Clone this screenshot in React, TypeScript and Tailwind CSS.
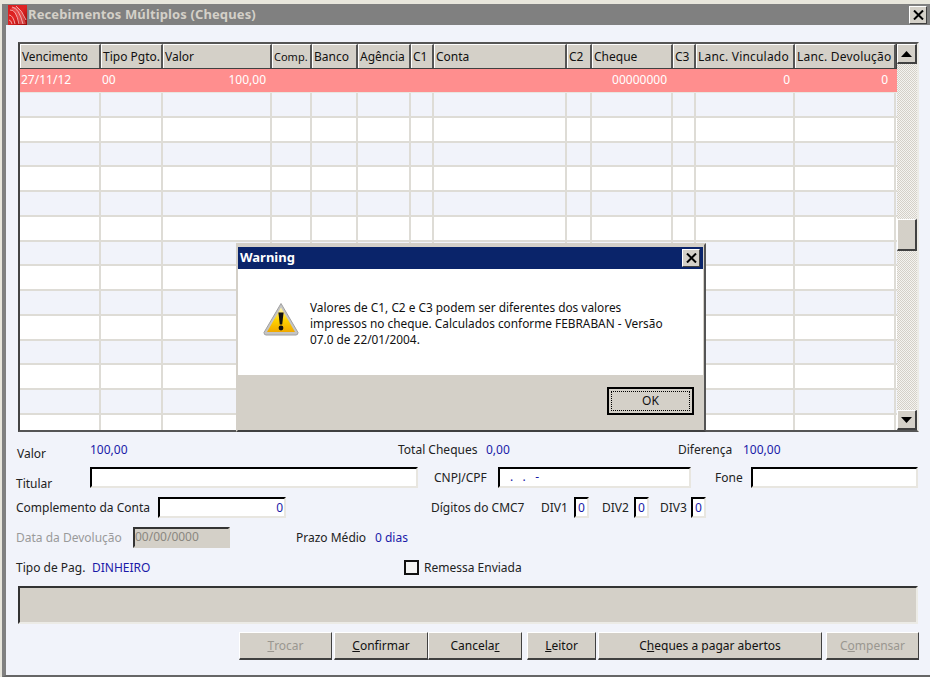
import React from "react";

const cols = [
  { label: "Vencimento", w: 81, cell: "27/11/12", pr: "", hc: "text-[11.8px]" },
  { label: "Tipo Pgto.", w: 62, cell: "00", pr: "", hc: "text-[12px]" },
  { label: "Valor", w: 109, cell: "100,00", pr: "text-right pr-[6px]", hc: "text-[12px]" },
  { label: "Comp.", w: 40, cell: "", pr: "", hc: "text-[11px]" },
  { label: "Banco", w: 46, cell: "", pr: "", hc: "text-[12px]" },
  { label: "Agência", w: 53, cell: "", pr: "", hc: "text-[12px]" },
  { label: "C1", w: 23, cell: "", pr: "", hc: "text-[12px]" },
  { label: "Conta", w: 133, cell: "", pr: "", hc: "text-[12px]" },
  { label: "C2", w: 25, cell: "", pr: "", hc: "text-[12px]" },
  { label: "Cheque", w: 81, cell: "00000000", pr: "text-right pr-[6px]", hc: "text-[12px]" },
  { label: "C3", w: 23, cell: "", pr: "", hc: "text-[12px]" },
  { label: "Lanc. Vinculado", w: 99, cell: "0", pr: "text-right pr-[5px]", hc: "text-[12px] tracking-[0.2px]" },
  { label: "Lanc. Devolução", w: 101, cell: "0", pr: "text-right pr-[8px]", hc: "text-[12px] tracking-[0.2px]" },
];

const raised =
  "border border-t-white border-l-white border-r-[#404040] border-b-[#404040] bg-[#d4d0c8]";
const raisedThick =
  "border border-t-white border-l-white border-r-2 border-b-2 border-r-[#404040] border-b-[#404040] bg-[#d4d0c8]";
const sunken =
  "border-2 border-t-black border-l-black border-r-[#e8e6e0] border-b-[#e8e6e0] bg-white";

function CloseBtn({ size }: { size: number }) {
  return (
    <div
      className={`${raised} flex items-center justify-center shrink-0`}
      style={{ width: size, height: size }}
    >
      <svg width="11" height="10" viewBox="0 0 11 10">
        <path d="M1 0.5 L10 9.5 M10 0.5 L1 9.5" stroke="#000" strokeWidth="2" />
      </svg>
    </div>
  );
}

function Arrow({ up }: { up?: boolean }) {
  return (
    <div className={`${raisedThick} h-[20px] w-[20px] flex items-center justify-center shrink-0`}>
      <svg width="11" height="6" viewBox="0 0 11 6">
        <path d={up ? "M5.5 0 L11 6 L0 6 Z" : "M0 0 L11 0 L5.5 6 Z"} fill="#000" />
      </svg>
    </div>
  );
}

function Btn({
  w,
  ml,
  disabled,
  pre,
  u,
  post,
}: {
  w: number;
  ml: number;
  disabled?: boolean;
  pre?: string;
  u: string;
  post?: string;
}) {
  return (
    <div
      className={`h-[28px] shrink-0 flex items-center justify-center border border-t-white border-l-white border-r-[#404040] border-b-[#404040] border-b-2 bg-[#d4d0c8] text-[12px] ${
        disabled ? "text-[#9a9790]" : "text-[#111]"
      }`}
      style={{ width: w, marginLeft: ml }}
    >
      {pre}
      <span className="underline">{u}</span>
      {post}
    </div>
  );
}

function Logo() {
  return (
    <svg width="19" height="20" viewBox="0 0 19 20" className="shrink-0">
      <defs>
        <linearGradient id="lg" x1="0" y1="0" x2="1" y2="1">
          <stop offset="0" stopColor="#d81e1e" />
          <stop offset="0.5" stopColor="#e02424" />
          <stop offset="1" stopColor="#960808" />
        </linearGradient>
      </defs>
      <rect width="19" height="20" fill="url(#lg)" />
      <path d="M3 3 Q9 0 13 6 Q16 11 18 19 L12 19 Q9 9 3 3 Z" fill="#ee6a6a" opacity="0.55" />
      <path
        d="M2 5 Q8 4 11 19 M4 2 Q11 3 15 19 M8 1 Q14 5 18 15 M1 10 Q5 10 7 19 M1 15 Q3 15 4 19"
        stroke="#f9c8c8"
        strokeWidth="0.8"
        fill="none"
      />
    </svg>
  );
}

function WarnIcon() {
  return (
    <svg width="36" height="34" viewBox="0 0 36 34" className="shrink-0">
      <defs>
        <linearGradient id="wy" x1="0" y1="0" x2="0" y2="1">
          <stop offset="0" stopColor="#fff6b8" />
          <stop offset="0.5" stopColor="#ffd400" />
          <stop offset="1" stopColor="#f0a800" />
        </linearGradient>
      </defs>
      <path
        d="M18 1.5 L35 30.5 Q35 33 33 33 L3 33 Q1 33 1 30.5 Z"
        fill="#c4c4c4"
        stroke="#a0a0a0"
        strokeWidth="1"
        strokeLinejoin="round"
      />
      <path d="M18 5.5 L32 30 L4 30 Z" fill="url(#wy)" />
      <path d="M15.4 10.5 L20.6 10.5 L19.2 22.5 L16.8 22.5 Z" fill="#111" />
      <circle cx="18" cy="26" r="2.4" fill="#111" />
    </svg>
  );
}

function Grid() {
  const rows = Array.from({ length: 14 });
  return (
    <div className="ml-[12px] mt-[17px] w-[901px] h-[390px] flex border-2 border-t-[#555] border-l-[#444] border-b-[#555] border-r-[#ecebe6] bg-white overflow-hidden">
      <div className="w-[877px] shrink-0 flex flex-col">
        <div className="flex h-[25px] shrink-0 bg-[#404040]">
          {cols.map((c) => (
            <div
              key={c.label}
              className={`h-[24px] border-t border-l border-white border-r-2 border-r-[#555] bg-[#d4d0c8] pl-[1px] leading-[23px] text-[#111] whitespace-nowrap overflow-hidden shrink-0 ${c.hc}`}
              style={{ width: c.w }}
            >
              {c.label}
            </div>
          ))}
        </div>
        <div className="flex h-[24px] shrink-0 bg-[#ff8e8e] border-b border-[#e8e6e0]">
          {cols.map((c) => (
            <div
              key={c.label}
              className={`shrink-0 pl-[1px] text-[12px] leading-[21px] text-white whitespace-nowrap ${c.pr}`}
              style={{ width: c.w }}
            >
              {c.cell}
            </div>
          ))}
        </div>
        {rows.map((_, i) => (
          <div
            key={i}
            className={`flex h-[24.75px] shrink-0 border-b-2 border-[#dedcd6] ${
              i % 2 === 0 ? "bg-[#f1f3fa]" : "bg-white"
            }`}
          >
            {cols.map((c) => (
              <div key={c.label} className="shrink-0 border-r-2 border-[#dedcd6]" style={{ width: c.w }} />
            ))}
          </div>
        ))}
      </div>
      <div className="w-[20px] shrink-0 flex flex-col bg-[repeating-conic-gradient(#d4d0c8_0_25%,#f4f3f0_0_50%)] bg-[length:2px_2px]">
        <Arrow up />
        <div className="h-[155px] shrink-0" />
        <div className={`${raisedThick} h-[32px] shrink-0`} />
        <div className="flex-1" />
        <Arrow />
      </div>
    </div>
  );
}

function Dialog() {
  return (
    <div className="absolute left-[230px] top-[239px] w-[470px] h-[189px] border-2 border-t-[#d4d0c8] border-l-[#d4d0c8] border-r-[#555] border-b-[#404040] bg-[#d4d0c8] pt-[2px] pr-[1px] pb-[2px] flex flex-col">
      <div className="h-[22px] shrink-0 bg-[#0a246a] flex items-center justify-between pl-[2px] pr-[3px]">
        <span className="text-[13px] font-bold text-white">Warning</span>
        <CloseBtn size={18} />
      </div>
      <div className="h-[106px] shrink-0 bg-white flex items-start pl-[25px] pt-[33px]">
        <WarnIcon />
        <div className="ml-[11px] text-[11.85px] leading-[16px] text-[#111] -mt-[3px]">
          <div>Valores de C1, C2 e C3 podem ser diferentes dos valores</div>
          <div>impressos no cheque. Calculados conforme FEBRABAN - Versão</div>
          <div>07.0 de 22/01/2004.</div>
        </div>
      </div>
      <div className="flex-1 flex justify-end items-start pt-[12px] pr-[9px]">
        <div className="h-[28px] w-[87px] border-2 border-black p-[2px] bg-[#d4d0c8]">
          <div className="h-full border border-dotted border-black flex items-center justify-center text-[12px] text-[#111]">
            OK
          </div>
        </div>
      </div>
    </div>
  );
}

const Blue = ({ children }: { children: React.ReactNode }) => (
  <span className="text-[#1a1aa8]">{children}</span>
);

function Form() {
  return (
    <div className="pl-[10px] text-[12px] text-[#222]">
      <div className="flex h-[29px] mt-[6px] items-start leading-[16px]">
        <span className="w-[74px] shrink-0 pt-[8px] pl-[1px]">Valor</span>
        <span className="w-[308px] shrink-0 pt-[4px]"><Blue>100,00</Blue></span>
        <span className="w-[88px] shrink-0 pt-[4px]">Total Cheques</span>
        <span className="w-[192px] shrink-0 pt-[4px]"><Blue>0,00</Blue></span>
        <span className="w-[65px] shrink-0 pt-[4px]">Diferença</span>
        <span className="pt-[4px]"><Blue>100,00</Blue></span>
      </div>
      <div className="flex h-[30px] items-start">
        <span className="w-[74px] shrink-0 pt-[8px]">Titular</span>
        <div className={`${sunken} w-[328px] h-[21px] shrink-0`} />
        <span className="w-[80px] shrink-0 pl-[16px] pt-[2px]">CNPJ/CPF</span>
        <div className={`${sunken} w-[193px] h-[21px] shrink-0 text-[#1a1aa8] text-[12px] leading-[16px] pl-[10px] whitespace-pre`}>
          .{"   "}.{"   "}-
        </div>
        <span className="w-[60px] shrink-0 pl-[24px] pt-[2px]">Fone</span>
        <div className={`${sunken} w-[167px] h-[21px] shrink-0`} />
      </div>
      <div className="flex h-[30px] items-start">
        <span className="w-[142px] shrink-0 pt-[2px]">Complemento da Conta</span>
        <div className={`${sunken} w-[128px] h-[21px] shrink-0 text-right text-[#1a1aa8] leading-[17px] pr-[1px]`}>0</div>
        <span className="w-[255px] shrink-0 pl-[145px] pt-[2px]">Dígitos do CMC7</span>
        <span className="w-[33px] shrink-0 pt-[2px]">DIV1</span>
        <div className={`${sunken} w-[15px] h-[21px] shrink-0 text-center text-[#1a1aa8] leading-[17px]`}>0</div>
        <span className="w-[45px] shrink-0 pl-[13px] pt-[2px]">DIV2</span>
        <div className={`${sunken} w-[15px] h-[21px] shrink-0 text-center text-[#1a1aa8] leading-[17px]`}>0</div>
        <span className="w-[42px] shrink-0 pl-[11px] pt-[2px]">DIV3</span>
        <div className={`${sunken} w-[15px] h-[21px] shrink-0 text-center text-[#1a1aa8] leading-[17px]`}>0</div>
      </div>
      <div className="flex h-[30px] items-start">
        <span className="w-[117px] shrink-0 pt-[2px] text-[#9a9a9a]">Data da Devolução</span>
        <div className="w-[97px] h-[21px] shrink-0 border-2 border-t-[#333] border-l-[#333] border-r-[#d4d0c8] border-b-[#d4d0c8] bg-[#d4d0c8] text-[#8a8780] leading-[16px]">
          00/00/0000
        </div>
        <span className="w-[79px] shrink-0 ml-[66px] pt-[2px]">Prazo Médio</span>
        <span className="pt-[2px]"><Blue>0 dias</Blue></span>
      </div>
      <div className="flex h-[21px] items-center">
        <span className="w-[76px] shrink-0">Tipo de Pag.</span>
        <span className="w-[312px] shrink-0"><Blue>DINHEIRO</Blue></span>
        <div className="w-[15px] h-[15px] shrink-0 border-2 border-[#111] bg-[#f4f4f4]" />
        <span className="ml-[5px]">Remessa Enviada</span>
      </div>
    </div>
  );
}

export default function App() {
  return (
    <div className="w-[930px] h-[677px] overflow-hidden bg-[#e8e6dc] pl-[2px] pt-[4px] font-['Noto_Sans','DejaVu_Sans',sans-serif]">
      <div className="relative h-[673px] bg-[#f1f3fa] border-l-[4px] border-l-[#808080] border-b-2 border-b-[#666]">
        <div className="h-[21px] bg-[#808080] flex items-center justify-between pl-[2px] pr-[3px]">
          <div className="flex items-center gap-[1px]">
            <Logo />
            <span className="text-[13px] font-bold tracking-[0.12px] text-[#d4d0c8]">Recebimentos Múltiplos (Cheques)</span>
          </div>
          <CloseBtn size={18} />
        </div>
        <Grid />
        <Form />
        <div className="ml-[12px] mt-[8px] w-[900px] h-[38px] border-2 border-t-[#333] border-l-[#333] border-r-[#ecebe6] border-b-[#ecebe6] bg-[#d4d0c8]" />
        <div className="flex mt-[8px]">
          <Btn w={93} ml={233} disabled u="T" post="rocar" />
          <Btn w={94} ml={2} u="C" post="onfirmar" />
          <Btn w={94} ml={0} pre="Cancela" u="r" />
          <Btn w={69} ml={5} u="L" post="eitor" />
          <Btn w={224} ml={2} pre="C" u="h" post="eques a pagar abertos" />
          <Btn w={93} ml={4} disabled pre="C" u="o" post="mpensar" />
        </div>
        <Dialog />
      </div>
    </div>
  );
}
